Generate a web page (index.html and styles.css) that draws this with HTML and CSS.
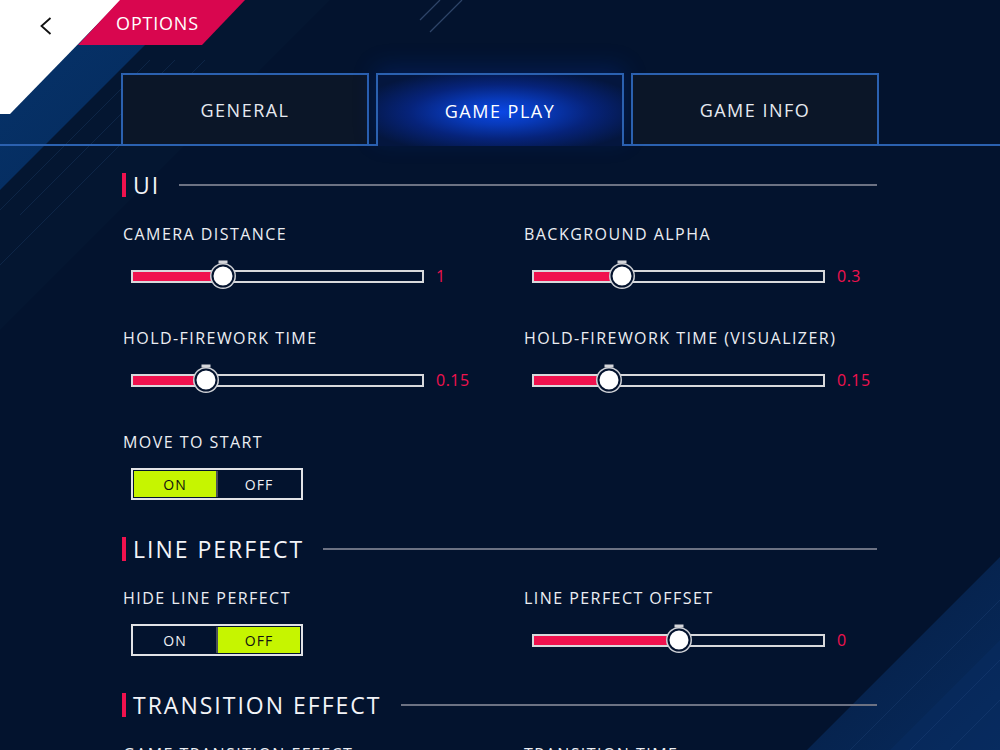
FILE: index.html
```html
<!DOCTYPE html>
<html lang="en">
<head>
<meta charset="utf-8">
<title>Options</title>
<link rel="stylesheet" href="styles.css">
</head>
<body>
<div class="page">
  <svg class="bg" width="1000" height="750" viewBox="0 0 1000 750" aria-hidden="true">
    <defs>
      <linearGradient id="bandA" x1="0" y1="0" x2="1" y2="1">
        <stop offset="0" stop-color="#06336b"/>
        <stop offset="1" stop-color="#052a5a"/>
      </linearGradient>
      <linearGradient id="bandB" x1="1" y1="1" x2="0" y2="0">
        <stop offset="0" stop-color="#072a5c"/>
        <stop offset="1" stop-color="#051d42"/>
      </linearGradient>
    </defs>
    <polygon points="0,0 330,0 0,330" fill="#041631"/>
    <polygon points="0,0 190,0 0,190" fill="url(#bandA)"/>
    <polygon points="0,0 121,0 10,114 0,114" fill="#ffffff"/>
    <g stroke="#3a6aa8" stroke-width="1" opacity="0.18">
      <line x1="150" y1="60" x2="0" y2="210"/>
      <line x1="175" y1="60" x2="20" y2="215"/>
      <line x1="205" y1="60" x2="0" y2="265"/>
    </g>
    <g stroke="#6f8fc0" stroke-width="1.2" opacity="0.4">
      <line x1="462" y1="0" x2="430" y2="32"/>
      <line x1="440" y1="0" x2="420" y2="20"/>
    </g>
    <polygon points="1000,557 1000,750 807,750" fill="url(#bandB)"/>
    <polygon points="1000,640 1000,750 890,750" fill="#072b62" opacity="0.5"/>
    <g stroke="#3b64a0" stroke-width="1" opacity="0.18">
      <line x1="1000" y1="600" x2="850" y2="750"/>
      <line x1="1000" y1="660" x2="910" y2="750"/>
      <line x1="1000" y1="700" x2="950" y2="750"/>
    </g>
  </svg>

  <header class="topbar">
    <button class="back" type="button" aria-label="Back">
      <svg width="14" height="20" viewBox="0 0 14 20"><path d="M11.5 2 L2.5 10 L11.5 18" fill="none" stroke="#111" stroke-width="1.8"/></svg>
    </button>
    <div class="title">OPTIONS</div>
  </header>

  <nav class="tabs">
    <div class="tab">GENERAL</div>
    <div class="tab active">GAME PLAY</div>
    <div class="tab">GAME INFO</div>
  </nav>

  <main class="content">
    <section class="section">
      <h2 class="section-head"><span class="section-title">UI</span><span class="rule"></span></h2>
      <div class="grid">
        <div class="field">
          <div class="label">CAMERA DISTANCE</div>
          <div class="slider">
            <div class="track"><div class="fill" style="width:31.1%"></div><div class="thumb" style="left:31.1%"></div></div>
            <span class="value">1</span>
          </div>
        </div>
        <div class="field">
          <div class="label">BACKGROUND ALPHA</div>
          <div class="slider">
            <div class="track"><div class="fill" style="width:30.4%"></div><div class="thumb" style="left:30.4%"></div></div>
            <span class="value">0.3</span>
          </div>
        </div>
        <div class="field">
          <div class="label">HOLD-FIREWORK TIME</div>
          <div class="slider">
            <div class="track"><div class="fill" style="width:25.3%"></div><div class="thumb" style="left:25.3%"></div></div>
            <span class="value">0.15</span>
          </div>
        </div>
        <div class="field">
          <div class="label">HOLD-FIREWORK TIME (VISUALIZER)</div>
          <div class="slider">
            <div class="track"><div class="fill" style="width:26%"></div><div class="thumb" style="left:26%"></div></div>
            <span class="value">0.15</span>
          </div>
        </div>
        <div class="field">
          <div class="label">MOVE TO START</div>
          <div class="toggle">
            <span class="opt on">ON</span><span class="sep"></span><span class="opt">OFF</span>
          </div>
        </div>
      </div>
    </section>

    <section class="section">
      <h2 class="section-head"><span class="section-title">LINE PERFECT</span><span class="rule"></span></h2>
      <div class="grid">
        <div class="field">
          <div class="label">HIDE LINE PERFECT</div>
          <div class="toggle">
            <span class="opt">ON</span><span class="sep"></span><span class="opt on">OFF</span>
          </div>
        </div>
        <div class="field">
          <div class="label">LINE PERFECT OFFSET</div>
          <div class="slider">
            <div class="track"><div class="fill" style="width:50.2%"></div><div class="thumb" style="left:50.2%"></div></div>
            <span class="value">0</span>
          </div>
        </div>
      </div>
    </section>

    <section class="section">
      <h2 class="section-head"><span class="section-title">TRANSITION EFFECT</span><span class="rule"></span></h2>
      <div class="grid">
        <div class="field">
          <div class="label">GAME TRANSITION EFFECT</div>
        </div>
        <div class="field">
          <div class="label">TRANSITION TIME</div>
        </div>
      </div>
    </section>
  </main>
</div>
</body>
</html>
```

FILE: styles.css
```css
* { box-sizing: border-box; }

html, body {
  margin: 0;
  padding: 0;
  background: #03132e;
}

body {
  font-family: "Open Sans", "DejaVu Sans", sans-serif;
  color: #eef0f5;
}

.page {
  position: relative;
  width: 1000px;
  height: 750px;
  overflow: hidden;
  background: #03132e;
}

.bg {
  position: absolute;
  left: 0;
  top: 0;
  z-index: 0;
}

.topbar, .tabs, .content {
  position: relative;
  z-index: 1;
}

/* top bar */
.topbar {
  display: flex;
  align-items: center;
  height: 45px;
  padding-left: 39px;
}

.back {
  width: 14px;
  height: 20px;
  padding: 0;
  border: 0;
  background: transparent;
  display: flex;
  margin-top: 6px;
}

.title {
  margin-left: 25px;
  width: 167px;
  height: 45px;
  background: #d9064f;
  clip-path: polygon(42px 0, 167px 0, 124px 45px, 0 45px);
  display: flex;
  align-items: center;
  justify-content: center;
  padding-right: 8px;
  font-size: 18px;
  letter-spacing: 0.8px;
  color: #fff;
}

/* tabs */
.tabs {
  display: flex;
  gap: 7px;
  margin-top: 28px;
  padding-left: 121px;
  height: 73px;
  border-bottom: 2px solid #2b61b0;
}

.tab {
  width: 248px;
  height: 71px;
  border: 2px solid #2b61b0;
  border-bottom: 0;
  background: #0b1628;
  display: flex;
  align-items: center;
  justify-content: center;
  font-size: 18px;
  letter-spacing: 1.5px;
  color: #e6e9f0;
  padding-top: 1px;
}

.tab.active {
  height: 73px;
  background: radial-gradient(ellipse 60% 62% at 50% 52%, #0a47e6 0%, #0839b8 30%, #06237a 62%, #04163e 100%);
  box-shadow: 0 -6px 22px rgba(10, 60, 200, 0.22);
  color: #fff;
}

/* content */
.content {
  padding: 27px 123px 0 122px;
}

.section {
  margin-bottom: 37px;
}

.section-head {
  display: flex;
  align-items: center;
  height: 24px;
  margin: 0 0 27px;
  font-weight: 400;
}

.section-title {
  display: flex;
  align-items: center;
  height: 24px;
  border-left: 4px solid #f0124e;
  padding-left: 7px;
  font-size: 23px;
  line-height: 24px;
  letter-spacing: 2px;
  color: #f3f4f8;
}

.rule {
  flex: 1;
  height: 2px;
  margin-left: 19px;
  background: #6c7283;
}

.grid {
  display: grid;
  grid-template-columns: 401px 354px;
  row-gap: 36px;
}

.field {
  display: flex;
  flex-direction: column;
  gap: 16px;
}

.label {
  height: 20px;
  line-height: 20px;
  font-size: 16px;
  letter-spacing: 1.45px;
  white-space: nowrap;
  color: #eceef3;
  padding-left: 1px;
}

/* slider */
.slider {
  display: flex;
  align-items: center;
  height: 32px;
  padding-left: 9px;
}

.track {
  position: relative;
  width: 293px;
  height: 13px;
  border: 2px solid #d8d9dc;
  background: #03132e;
}

.fill {
  position: absolute;
  left: 0;
  top: 0;
  bottom: 0;
  background: #f0124e;
}

.thumb {
  position: absolute;
  top: 50%;
  width: 23px;
  height: 23px;
  border-radius: 50%;
  background: #fff;
  border: 2px solid #04132e;
  box-shadow: 0 0 0 1.5px #cfd1d6;
  transform: translate(-50%, -50%);
}

.thumb::before {
  content: "";
  position: absolute;
  left: 50%;
  top: -6px;
  width: 9px;
  height: 3px;
  margin-left: -4.5px;
  background: #d5d6da;
}

.value {
  margin-left: 12px;
  font-size: 16px;
  letter-spacing: 0.5px;
  color: #f0124e;
}

/* toggle */
.toggle {
  display: flex;
  margin-left: 9px;
  width: 172px;
  height: 32px;
  border: 2px solid #e2e3e6;
  padding: 1px;
  background: #03132e;
}

.opt {
  flex: 1;
  display: flex;
  align-items: center;
  justify-content: center;
  font-size: 14px;
  letter-spacing: 1px;
  color: #f0f1f5;
}

.opt.on {
  background: #c6f500;
  color: #111;
}

.sep {
  width: 2px;
  background: #4a4f5a;
}
```
